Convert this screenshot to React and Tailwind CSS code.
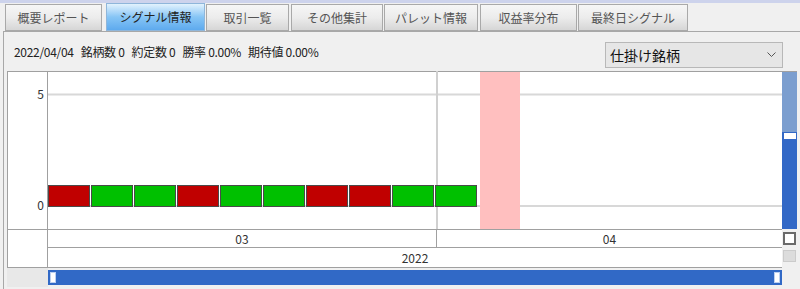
import React from 'react';

const tabs = [
  { label: '概要レポート', cls: 'ml-[5px] w-[97px]' },
  { label: 'シグナル情報', cls: 'ml-[4px] w-[99px]', active: true },
  { label: '取引一覧', cls: 'ml-[1px] w-[83px]' },
  { label: 'その他集計', cls: 'ml-[2px] w-[92px]' },
  { label: 'パレット情報', cls: 'ml-[1px] w-[94px]' },
  { label: '収益率分布', cls: 'ml-[2px] w-[97px]' },
  { label: '最終日シグナル', cls: 'ml-[1px] w-[110px]' },
];

// 1 = win (green), 0 = loss (red)
const signals = [0, 1, 1, 0, 1, 1, 0, 0, 1, 1];

function Tab({ label, cls, active }) {
  if (active) {
    return (
      <div className={`${cls} h-[28px] flex items-center justify-center border border-[#8fb6da] bg-gradient-to-b from-[#e2f2fd] via-[#86c5f5] to-[#5eaaee] text-[12px] text-[#222]`}>
        {label}
      </div>
    );
  }
  return (
    <div className={`${cls} h-[27px] flex items-center justify-center border border-[#a9a9a9] bg-gradient-to-b from-[#f6f6f6] via-[#ececec] to-[#d6d6d6] text-[12px] text-[#555]`}>
      {label}
    </div>
  );
}

function Plot() {
  return (
    <svg width="734" height="158" className="block">
      <rect x="0" y="0" width="734" height="158" fill="#fff" />
      <line x1="0" y1="0.5" x2="734" y2="0.5" stroke="#a0a0a0" />
      <line x1="0" y1="23.5" x2="734" y2="23.5" stroke="#d8d8d8" strokeWidth="2" />
      <line x1="0" y1="135" x2="734" y2="135" stroke="#d8d8d8" strokeWidth="2" />
      <line x1="389" y1="0" x2="389" y2="158" stroke="#d0d0d0" strokeWidth="2" />
      {signals.map((s, i) => (
        <rect
          key={i}
          x={i * 43 + 0.5}
          y={114.5}
          width={41}
          height={21}
          fill={s ? '#00c000' : '#c00000'}
          stroke="#4a4a4a"
        />
      ))}
      <rect x="432" y="1" width="40" height="157" fill="#ffbfbf" />
    </svg>
  );
}

export default function App() {
  return (
    <div className="w-[800px] h-[289px] bg-[#f0f0f0] overflow-hidden flex flex-col font-['Noto_Sans_CJK_JP',sans-serif]">
      <div className="h-[3px] bg-[#cdd3ec]" />
      <div className="h-[28px] flex items-end">
        {tabs.map((t) => (
          <Tab key={t.label} {...t} />
        ))}
      </div>

      <div className="flex-1 ml-[3px] border-l border-t border-[#a8a8a8] flex flex-col">
        <div className="h-[39px] flex items-start justify-between">
          <div className="mt-[12px] ml-[10px] flex gap-[7px] text-[12px] text-[#222] leading-[16px] tracking-[-0.3px]">
            <span>2022/04/04</span>
            <span>銘柄数 0</span>
            <span>約定数 0</span>
            <span>勝率 0.00%</span>
            <span>期待値 0.00%</span>
          </div>
          <div className="mt-[10px] mr-[17px] w-[178px] h-[26px] border border-[#b8b8b8] bg-[#e6e6e6] flex items-center justify-between pl-[4px] pr-[6px]">
            <span className="text-[14px] text-[#111] leading-none">仕掛け銘柄</span>
            <svg width="9" height="6" viewBox="0 0 9 6">
              <path d="M0.5 0.5 L4.5 4.5 L8.5 0.5" fill="none" stroke="#555" strokeWidth="1" />
            </svg>
          </div>
        </div>

        <div className="ml-[3px] w-[790px] flex flex-col">
          {/* plot row */}
          <div className="flex h-[158px]">
            <div className="w-[41px] bg-white border-l border-t border-r border-[#a0a0a0] flex flex-col items-end pr-[3px] text-[12px] text-[#333] leading-none">
              <span className="mt-[16px]">5</span>
              <span className="mt-[99px]">0</span>
            </div>
            <Plot />
            <div className="w-[15px] flex flex-col border-t border-[#a0a0a0]">
              <div className="h-[60px] bg-[#7b9ecf]" />
              <div className="flex-1 bg-[#3268c6] pt-[1px] flex justify-center">
                <div className="w-[12px] h-[6px] bg-white" />
              </div>
            </div>
          </div>

          {/* axis rows */}
          <div className="flex h-[39px]">
            <div className="w-[41px] bg-white border-l border-t border-r border-b border-[#a0a0a0]" />
            <div className="w-[734px] flex flex-col text-[12px] text-[#333] leading-none">
              <div className="h-[19px] flex bg-white border-t border-b border-[#a0a0a0]">
                <div className="w-[389px] border-r border-[#a0a0a0] flex items-center justify-center">03</div>
                <div className="flex-1 flex items-center justify-center">04</div>
              </div>
              <div className="h-[20px] bg-white border-b border-[#a0a0a0] flex items-center justify-center">2022</div>
            </div>
            <div className="w-[15px] flex flex-col items-center pt-[3px] gap-[5px]">
              <div className="w-[13px] h-[13px] bg-white border-2 border-[#6a6a6a]" />
              <div className="w-[13px] h-[12px] bg-[#dcdcdc] border border-[#cbcbcb]" />
            </div>
          </div>

          {/* horizontal scrollbar row */}
          <div className="flex h-[19px]">
            <div className="w-[41px] bg-[#e8e8e8]" />
            <div className="w-[734px] mt-[2px] h-[15px] bg-[#3169c6] flex items-center justify-between px-[2px]">
              <div className="w-[6px] h-[11px] bg-white border border-[#bcd0f0]" />
              <div className="w-[6px] h-[11px] bg-white border border-[#bcd0f0]" />
            </div>
          </div>
        </div>
      </div>
    </div>
  );
}
